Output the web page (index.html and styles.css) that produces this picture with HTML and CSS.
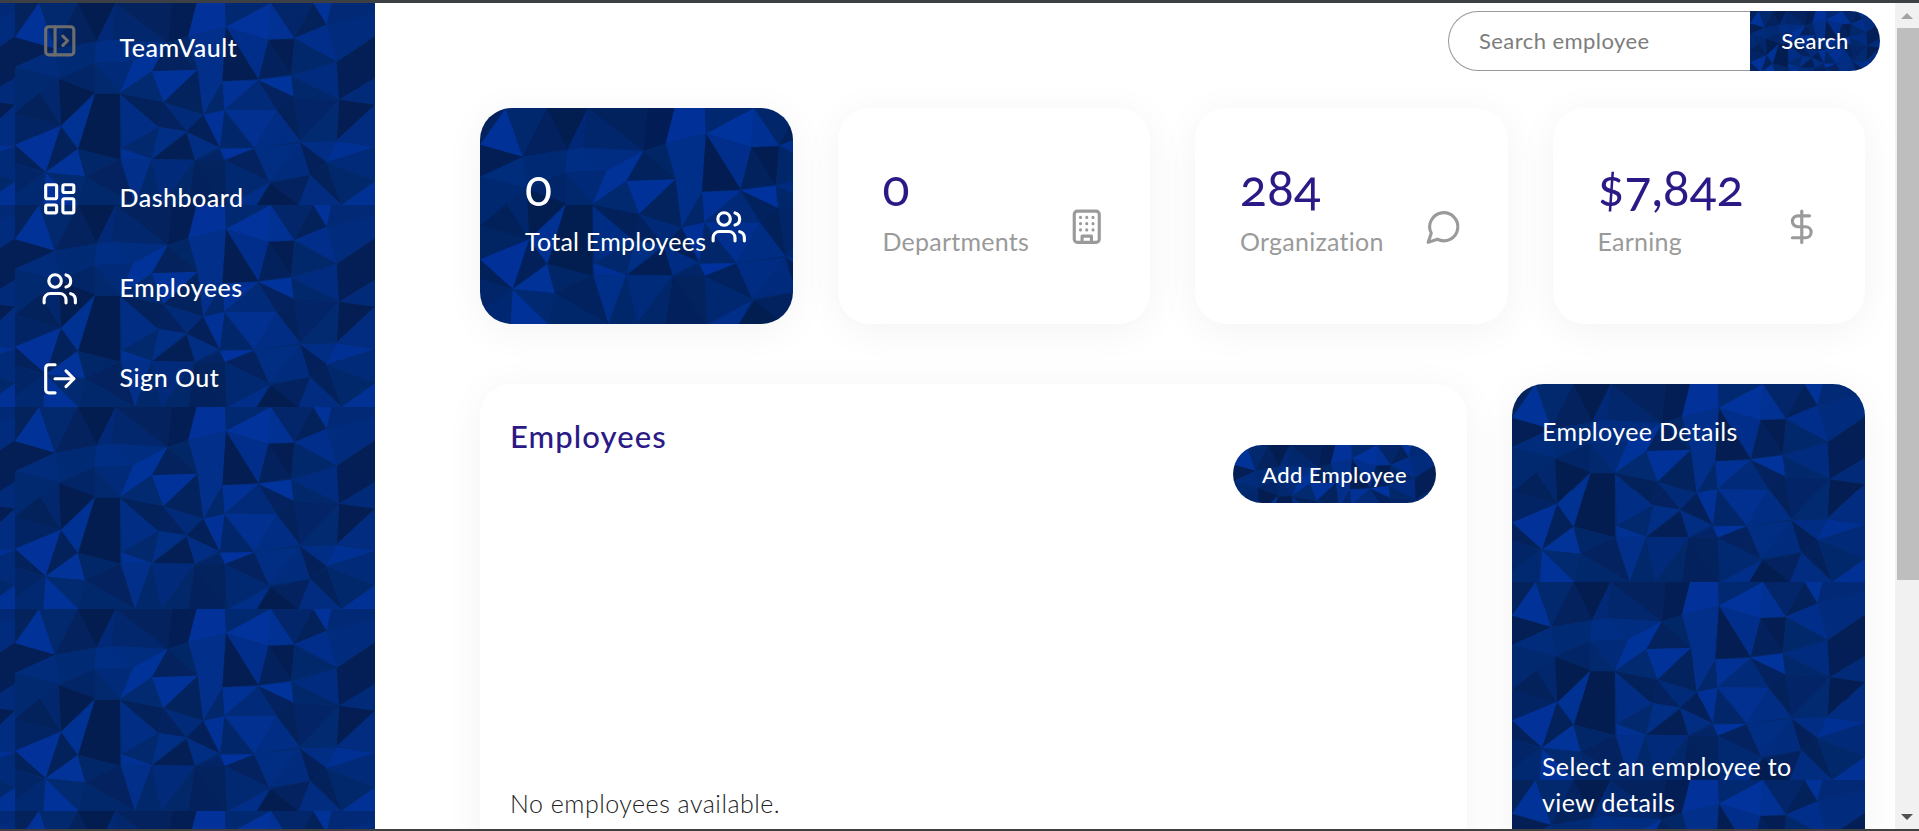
FILE: index.html
```html
<!DOCTYPE html>
<html lang="en">
<head>
<meta charset="utf-8">
<title>TeamVault</title>
<link rel="stylesheet" href="styles.css">
</head>
<body>
<div class="app">
  <aside class="sidebar poly-tile">
    <div class="brand">
      <svg class="icon toggle" viewBox="0 0 24 24"><rect width="18" height="18" x="3" y="3" rx="2"/><path d="M9 3v18"/><path d="m14 9 3 3-3 3"/></svg>
      <span class="brand-name">TeamVault</span>
    </div>
    <nav class="nav">
      <a class="nav-item"><svg class="icon" viewBox="0 0 24 24"><rect width="7" height="9" x="3" y="3" rx="1"/><rect width="7" height="5" x="14" y="3" rx="1"/><rect width="7" height="9" x="14" y="12" rx="1"/><rect width="7" height="5" x="3" y="16" rx="1"/></svg><span>Dashboard</span></a>
      <a class="nav-item"><svg class="icon" viewBox="0 0 24 24"><path d="M16 21v-2a4 4 0 0 0-4-4H6a4 4 0 0 0-4 4v2"/><path d="M16 3.128a4 4 0 0 1 0 7.744"/><path d="M22 21v-2a4 4 0 0 0-3-3.87"/><circle cx="9" cy="7" r="4"/></svg><span>Employees</span></a>
      <a class="nav-item"><svg class="icon" viewBox="0 0 24 24"><path d="m16 17 5-5-5-5"/><path d="M21 12H9"/><path d="M9 21H5a2 2 0 0 1-2-2V5a2 2 0 0 1 2-2h4"/></svg><span>Sign Out</span></a>
    </nav>
  </aside>
  <main class="main">
    <div class="topbar">
      <form class="search">
        <input class="search-input" type="text" placeholder="Search employee">
        <button class="search-btn poly-cover" type="button">Search</button>
      </form>
    </div>
    <section class="stats">
      <div class="stat stat-primary poly-cover">
        <div class="stat-text"><div class="stat-num">0</div><div class="stat-label">Total Employees</div></div>
        <svg class="icon stat-icon" viewBox="0 0 24 24"><path d="M16 21v-2a4 4 0 0 0-4-4H6a4 4 0 0 0-4 4v2"/><path d="M16 3.128a4 4 0 0 1 0 7.744"/><path d="M22 21v-2a4 4 0 0 0-3-3.87"/><circle cx="9" cy="7" r="4"/></svg>
      </div>
      <div class="stat">
        <div class="stat-text"><div class="stat-num">0</div><div class="stat-label">Departments</div></div>
        <svg class="icon stat-icon" viewBox="0 0 24 24"><rect width="16" height="20" x="4" y="2" rx="2"/><path d="M9 22v-4h6v4"/><path d="M8 6h.01M16 6h.01M12 6h.01M12 10h.01M12 14h.01M16 10h.01M16 14h.01M8 10h.01M8 14h.01"/></svg>
      </div>
      <div class="stat">
        <div class="stat-text"><div class="stat-num">284</div><div class="stat-label">Organization</div></div>
        <svg class="icon stat-icon" viewBox="0 0 24 24"><path d="M7.9 20A9 9 0 1 0 4 16.1L2 22Z"/></svg>
      </div>
      <div class="stat">
        <div class="stat-text"><div class="stat-num">$7,842</div><div class="stat-label">Earning</div></div>
        <svg class="icon stat-icon" viewBox="0 0 24 24"><path d="M12 2v20"/><path d="M17 5H9.5a3.5 3.5 0 0 0 0 7h5a3.5 3.5 0 0 1 0 7H6"/></svg>
      </div>
    </section>
    <section class="panels">
      <div class="panel employees">
        <h2 class="panel-title">Employees</h2>
        <button class="add-btn poly-cover" type="button">Add Employee</button>
        <p class="empty">No employees available.</p>
      </div>
      <div class="panel details poly-width">
        <h3 class="details-title">Employee Details</h3>
        <p class="details-text">Select an employee to view details</p>
      </div>
    </section>
  </main>
  <div class="scrollbar">
    <div class="sb-btn"><span class="arrow-up"></span></div>
    <div class="sb-thumb"></div>
    <div class="sb-track"></div>
    <div class="sb-btn"><span class="arrow-down"></span></div>
  </div>
</div>
</body>
</html>
```

FILE: styles.css
```css
:root {
  --poly: url("data:image/svg+xml,%3Csvg xmlns='http://www.w3.org/2000/svg' width='1080' height='606' viewBox='0 0 1080 606'%3E%3Crect width='1080' height='606' fill='%23022a70'/%3E%3Cpath fill='%2304225c' d='M0 0H72L0 103Z'/%3E%3Cpath fill='%2300349e' d='M72 0 0 103 120 137Z'/%3E%3Cpath fill='%2302296f' d='M72 0H188L120 137Z'/%3E%3Cpath fill='%2303225f' d='M188 0 245 115 120 137Z'/%3E%3Cpath fill='%23031d50' d='M188 0H302L245 115Z'/%3E%3Cpath fill='%23012a7a' d='M302 0 245 115 290 110Z'/%3E%3Cpath fill='%2302286e' d='M302 0 458 120 290 110Z'/%3E%3Cpath fill='%2303235f' d='M302 0H470L458 120Z'/%3E%3Cpath fill='%23031e55' d='M470 0H545L520 100 458 120Z'/%3E%3Cpath fill='%23022868' d='M458 120 520 100 548 200Z'/%3E%3Cpath fill='%2303235f' d='M458 120 548 200 410 205Z'/%3E%3Cpath fill='%23012f86' d='M290 110 458 120 355 175Z'/%3E%3Cpath fill='%23012b78' d='M120 137 245 118 238 180 132 225Z'/%3E%3Cpath fill='%23012e80' d='M120 137 0 192 132 225Z'/%3E%3Cpath fill='%23041f55' d='M0 103 120 137 0 192Z'/%3E%3Cpath fill='%2301308a' d='M245 118 290 110 355 175 238 180Z'/%3E%3Cpath fill='%23012b7c' d='M238 180 355 175 315 270Z'/%3E%3Cpath fill='%2302266a' d='M238 180 132 228 240 268Z'/%3E%3Cpath fill='%23022a70' d='M238 180 315 270 240 268Z'/%3E%3Cpath fill='%230035a0' d='M355 175 458 120 410 205 315 270Z'/%3E%3Cpath fill='%230134a0' d='M410 205 548 200 445 298Z'/%3E%3Cpath fill='%23022b73' d='M315 270 410 205 445 298Z'/%3E%3Cpath fill='%2303245f' d='M445 298 548 200 565 335Z'/%3E%3Cpath fill='%2303215a' d='M315 272 445 298 430 372Z'/%3E%3Cpath fill='%23012f8a' d='M315 275 430 372 322 435Z'/%3E%3Cpath fill='%23032260' d='M445 298 515 385 432 372Z'/%3E%3Cpath fill='%23012c7c' d='M445 298 565 335 515 385Z'/%3E%3Cpath fill='%2301318a' d='M432 372 515 385 410 468Z'/%3E%3Cpath fill='%23022a70' d='M432 372 320 435 410 468Z'/%3E%3Cpath fill='%23041f55' d='M410 470 515 390 540 470Z'/%3E%3Cpath fill='%23012f88' d='M515 388 612 432 540 470Z'/%3E%3Cpath fill='%23012a73' d='M0 192 132 225 75 268 0 330Z'/%3E%3Cpath fill='%2303225c' d='M75 268 0 330 138 368Z'/%3E%3Cpath fill='%2302286e' d='M75 268 132 228 138 368Z'/%3E%3Cpath fill='%23031d50' d='M132 228 240 268 138 368Z'/%3E%3Cpath fill='%2300349a' d='M240 272 138 368 188 438Z'/%3E%3Cpath fill='%23031d50' d='M240 272H315V470L190 438Z'/%3E%3Cpath fill='%23022565' d='M0 330 138 368 0 425Z'/%3E%3Cpath fill='%230133a0' d='M138 368 0 425 92 508Z'/%3E%3Cpath fill='%2303225c' d='M138 370 188 438 92 508Z'/%3E%3Cpath fill='%2303225c' d='M0 425 92 508 0 480Z'/%3E%3Cpath fill='%230135a0' d='M188 438 92 508 210 520Z'/%3E%3Cpath fill='%2302286a' d='M188 438 315 470 210 520Z'/%3E%3Cpath fill='%23032260' d='M210 520 315 470 360 606Z'/%3E%3Cpath fill='%2302296e' d='M210 520 360 606H190Z'/%3E%3Cpath fill='%23012b74' d='M92 510 210 520 190 606Z'/%3E%3Cpath fill='%230134a0' d='M92 510 190 606H85Z'/%3E%3Cpath fill='%2302266a' d='M0 480 85 510 0 575Z'/%3E%3Cpath fill='%23012a75' d='M85 510 0 575V606H85Z'/%3E%3Cpath fill='%2301339a' d='M318 435 410 468 320 470Z'/%3E%3Cpath fill='%2301318f' d='M318 470 410 468 360 606Z'/%3E%3Cpath fill='%2302296e' d='M410 470 360 606H440Z'/%3E%3Cpath fill='%23012c7e' d='M410 468 540 470 440 606Z'/%3E%3Cpath fill='%2302296c' d='M540 470 440 606H520Z'/%3E%3Cpath fill='%2303215c' d='M540 472 635 606H520Z'/%3E%3Cpath fill='%2303245f' d='M540 472 630 472 635 606Z'/%3E%3Cpath fill='%2303266a' d='M540 472 612 440 630 472Z'/%3E%3Cpath fill='%230233a0' d='M545 0H630L633 72 520 100Z'/%3E%3Cpath fill='%2301318f' d='M520 100 633 72 622 235 565 335 548 200Z'/%3E%3Cpath fill='%23012a74' d='M630 0H768L633 72Z'/%3E%3Cpath fill='%230236a5' d='M633 72 768 0 760 110Z'/%3E%3Cpath fill='%23013399' d='M768 0 838 105 760 110Z'/%3E%3Cpath fill='%2303276c' d='M768 0H895L838 105Z'/%3E%3Cpath fill='%2303215a' d='M895 0 935 65 838 105Z'/%3E%3Cpath fill='%2301349e' d='M895 0H950L935 65Z'/%3E%3Cpath fill='%23012a78' d='M950 0H1080V30L935 65Z'/%3E%3Cpath fill='%23012c80' d='M935 65 1080 30V100Z'/%3E%3Cpath fill='%23012c80' d='M935 65 1080 100 965 175Z'/%3E%3Cpath fill='%23013090' d='M838 105 935 65 965 175Z'/%3E%3Cpath fill='%2302296e' d='M838 108 965 175 828 215Z'/%3E%3Cpath fill='%23041e52' d='M760 110 838 108 828 215Z'/%3E%3Cpath fill='%2303235e' d='M760 110 828 215 730 228Z'/%3E%3Cpath fill='%23013090' d='M633 72 760 110 730 228Z'/%3E%3Cpath fill='%23041e52' d='M633 72 730 228 622 235Z'/%3E%3Cpath fill='%23041f55' d='M965 178 1080 100V225Z'/%3E%3Cpath fill='%23041f58' d='M965 178 1080 225 972 290Z'/%3E%3Cpath fill='%23012c82' d='M828 218 965 178 970 288Z'/%3E%3Cpath fill='%2302296e' d='M828 218 970 288 835 282Z'/%3E%3Cpath fill='%230135a5' d='M730 230 828 218 835 280Z'/%3E%3Cpath fill='%23032260' d='M730 232 835 282 785 322Z'/%3E%3Cpath fill='%2301339c' d='M622 235 730 232 628 320Z'/%3E%3Cpath fill='%23012c7c' d='M730 232 785 322 628 320Z'/%3E%3Cpath fill='%2302286c' d='M622 240 628 320 565 335Z'/%3E%3Cpath fill='%23012c7c' d='M972 290 1080 225V305Z'/%3E%3Cpath fill='%23041e52' d='M972 290 1080 305 965 412Z'/%3E%3Cpath fill='%2303266a' d='M835 282 972 290 855 415Z'/%3E%3Cpath fill='%23022b74' d='M972 290 965 412 855 415Z'/%3E%3Cpath fill='%2303225c' d='M785 322 835 282 855 412Z'/%3E%3Cpath fill='%23013296' d='M628 320 785 322 718 435Z'/%3E%3Cpath fill='%23012f8a' d='M785 322 855 415 718 435Z'/%3E%3Cpath fill='%2302276c' d='M628 325 718 435 615 432Z'/%3E%3Cpath fill='%2301339e' d='M565 335 628 322 615 432Z'/%3E%3Cpath fill='%2303205a' d='M515 385 565 335 612 432Z'/%3E%3Cpath fill='%230134a5' d='M615 437 718 435 630 470Z'/%3E%3Cpath fill='%23032260' d='M630 472 718 438 762 535Z'/%3E%3Cpath fill='%23012f88' d='M718 435 855 420 762 535Z'/%3E%3Cpath fill='%23012d80' d='M855 420 885 515 762 535Z'/%3E%3Cpath fill='%23012f8a' d='M855 418 965 415 935 478Z'/%3E%3Cpath fill='%2303205a' d='M855 418 935 478 885 515Z'/%3E%3Cpath fill='%2301329c' d='M965 415 1080 432 935 478Z'/%3E%3Cpath fill='%23012c7c' d='M935 478 1080 432V535Z'/%3E%3Cpath fill='%2303225c' d='M935 480 885 515 980 606Z'/%3E%3Cpath fill='%2302296e' d='M935 480 1080 535 980 606Z'/%3E%3Cpath fill='%2301339c' d='M980 606 1080 535V606Z'/%3E%3Cpath fill='%23012e85' d='M885 515 980 606H850Z'/%3E%3Cpath fill='%23032260' d='M768 540 885 517 850 606Z'/%3E%3Cpath fill='%23031d50' d='M768 540 850 606H725Z'/%3E%3Cpath fill='%2301308f' d='M762 540 725 606H640Z'/%3E%3Cpath fill='%23012a74' d='M630 472 762 535 640 606Z'/%3E%3Cpath fill='%23012e85' d='M965 412 1080 305V432Z'/%3E%3Crect width='1080' height='606' fill='%23021f5c' opacity='.1'/%3E%3C/svg%3E");
  --ink: #2b1a86;
  --muted: #9a9a9a;
}

* { box-sizing: border-box; }

html, body { height: 100%; margin: 0; }

body {
  overflow: hidden;
  background: #fff;
  border-top: 3px solid #3c3f43;
  border-bottom: 2px solid #404040;
  font-family: Lato, "Open Sans", sans-serif;
  color: #333;
}

.app { display: flex; height: 100%; }

.poly-tile { background: var(--poly) 15px 0 / 360px 202px repeat; }
.poly-cover { background: var(--poly) 0 0 / cover no-repeat; }
.poly-width { background: var(--poly) 0 0 / 100% auto repeat-y; }

.icon {
  width: 37.5px;
  height: 37.5px;
  flex: none;
  fill: none;
  stroke: currentColor;
  stroke-width: 2;
  stroke-linecap: round;
  stroke-linejoin: round;
}

/* sidebar */
.sidebar {
  width: 375px;
  flex: none;
  color: #fff;
  padding: 19px 0 0 41px;
}

.brand { display: flex; gap: 41px; height: 132px; }
.toggle { color: #6d6d6d; }
.brand-name { font-size: 25px; font-weight: 500; line-height: 30px; margin-top: 10px; letter-spacing: .02em; }

.nav { display: flex; flex-direction: column; }
.nav-item { display: flex; align-items: center; gap: 41px; height: 90px; font-size: 25px; font-weight: 500; letter-spacing: .02em; }
.nav-item span { margin-top: -4px; }

/* main */
.main {
  flex: 1;
  min-width: 0;
  overflow: hidden;
  padding: 8px 30px 0 105px;
  background: #fff;
}

.topbar { display: flex; justify-content: flex-end; margin-right: -15px; }

.search { display: flex; width: 432px; height: 60px; }

.search-input {
  flex: 1;
  min-width: 0;
  padding: 0 0 2px 30px;
  border: 1px solid #999;
  border-right: 0;
  border-radius: 30px 0 0 30px;
  outline: 0;
  font: 400 22px Lato, sans-serif;
  letter-spacing: .02em;
}
.search-input::placeholder { color: #7d7d7d; opacity: 1; }

.search-btn {
  width: 130px;
  padding: 0 0 2px;
  border: 0;
  border-radius: 0 30px 30px 0;
  color: #fff;
  font: 500 22px Lato, sans-serif;
  letter-spacing: .02em;
}

.stats { display: flex; gap: 45px; margin-top: 37px; }

.stat {
  flex: 1;
  height: 216px;
  padding: 0 45px;
  border-radius: 32px;
  background-color: #fff;
  box-shadow: 0 6px 40px rgba(0, 0, 0, .05);
  display: flex;
  align-items: center;
  justify-content: space-between;
}

.stat-text { margin-top: -24px; }

.stat-num {
  font-size: 50px;
  font-weight: 400;
  line-height: 74px;
  color: var(--ink);
  font-variant-numeric: oldstyle-nums;
}

.stat-label { font-size: 25px; line-height: 34px; color: var(--muted); letter-spacing: .01em; white-space: nowrap; }

.stat-icon { color: var(--muted); margin-top: 22px; }

.stat-primary .stat-num, .stat-primary .stat-label, .stat-primary .stat-icon { color: #fff; }

.panels { display: flex; gap: 45px; margin-top: 60px; }

.panel {
  height: 700px;
  border-radius: 32px;
  padding: 30px;
  box-shadow: 0 6px 40px rgba(0, 0, 0, .05);
}

.employees {
  flex: 1;
  min-width: 0;
  background: #fff;
  display: flex;
  flex-direction: column;
  align-items: flex-start;
}

.panel-title { margin: 4px 0 0; font-size: 31px; font-weight: 500; line-height: 36px; color: var(--ink); letter-spacing: .035em; }

.add-btn {
  align-self: flex-end;
  width: 203px;
  height: 58px;
  margin-top: -9px;
  margin-right: 1px;
  border: 0;
  border-radius: 29px;
  color: #fff;
  font: 500 22px Lato, sans-serif;
  letter-spacing: .02em;
}

.empty { margin: 283px 0 0; font-size: 25px; font-weight: 300; line-height: 34px; color: #222; letter-spacing: .02em; }

.details { width: 353px; flex: none; color: #fff; }

.details-title { margin: 0; font-size: 25px; font-weight: 400; line-height: 34px; letter-spacing: .015em; }

.details-text { margin: 300px 0 0; font-size: 25px; line-height: 36px; letter-spacing: .015em; }

/* scrollbar */
.scrollbar { width: 24px; flex: none; display: flex; flex-direction: column; background: #f1f1f1; }
.sb-btn { height: 25px; display: flex; align-items: center; justify-content: center; flex: none; }
.sb-thumb { height: 552px; margin-left: 2px; background: #bebebe; flex: none; }
.sb-track { flex: 1; }
.arrow-up { border: 6px solid transparent; border-top: 0; border-bottom: 6px solid #a3a3a3; }
.arrow-down { border: 6px solid transparent; border-bottom: 0; border-top: 6px solid #505050; }
```
